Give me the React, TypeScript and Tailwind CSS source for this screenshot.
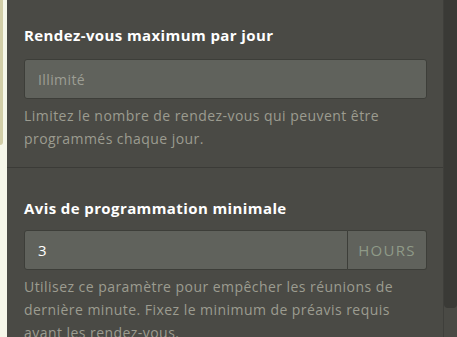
export default function App() {
  return (
    <div
      className="flex h-[337px] w-[457px] overflow-hidden bg-[#f6f7ea]"
      style={{ fontFamily: '"Open Sans", Arial, sans-serif' }}
    >
      {/* sliver of the card behind the panel */}
      <div className="w-[7px] shrink-0">
        <div className="h-[145px] w-[3px] rounded-br-[3px] bg-[#d2cea7]" />
      </div>

      <div className="flex min-w-0 flex-1 flex-col bg-[#4a4a45]">
        <section className="border-b border-[#3b3b37] pb-[17px] pl-[17px] pr-[16px] pt-[24px]">
          <h2 className="h-[22px] text-[15px] font-bold leading-[22px] tracking-[0.4px] text-white">
            Rendez-vous maximum par jour
          </h2>
          <input
            type="text"
            placeholder="Illimité"
            className="mt-[13px] block h-[40px] w-full rounded-[3px] border border-[#3d3e39] bg-[#60625c] px-[13px] text-[14px] tracking-[0.4px] text-white placeholder:text-[#9d9e94] focus:outline-none"
          />
          <p className="mt-[5px] whitespace-nowrap text-[14px] leading-[23px] tracking-[0.45px] text-[#9c9c90]">
            Limitez le nombre de rendez-vous qui peuvent être
            <br />
            programmés chaque jour.
          </p>
        </section>

        <section className="pl-[17px] pr-[16px] pt-[29px]">
          <h2 className="h-[22px] text-[15px] font-bold leading-[22px] tracking-[0.4px] text-white">
            Avis de programmation minimale
          </h2>
          <div className="mt-[11px] flex h-[40px]">
            <input
              type="text"
              defaultValue="3"
              className="block h-full min-w-0 flex-1 rounded-l-[3px] border border-[#3d3e39] bg-[#60625c] px-[13px] text-[15px] text-white focus:outline-none"
            />
            <span className="flex w-[79px] items-center justify-center rounded-r-[3px] border border-l-0 border-[#3d3e39] bg-[#60625c] text-[15px] tracking-[1.3px] text-[#8f9a88]">
              HOURS
            </span>
          </div>
          <p className="mt-[5px] whitespace-nowrap text-[14px] leading-[23px] tracking-[0.45px] text-[#9c9c90]">
            Utilisez ce paramètre pour empêcher les réunions de
            <br />
            dernière minute. Fixez le minimum de préavis requis
            <br />
            avant les rendez-vous.
          </p>
        </section>
      </div>

      {/* scrollbar */}
      <div className="flex w-[14px] shrink-0 flex-col border-l border-[#3f3f3b] bg-[#4a4a45]">
        <div className="h-[308px] rounded-b-[4px] bg-[#3a3a36]" />
      </div>
    </div>
  );
}
